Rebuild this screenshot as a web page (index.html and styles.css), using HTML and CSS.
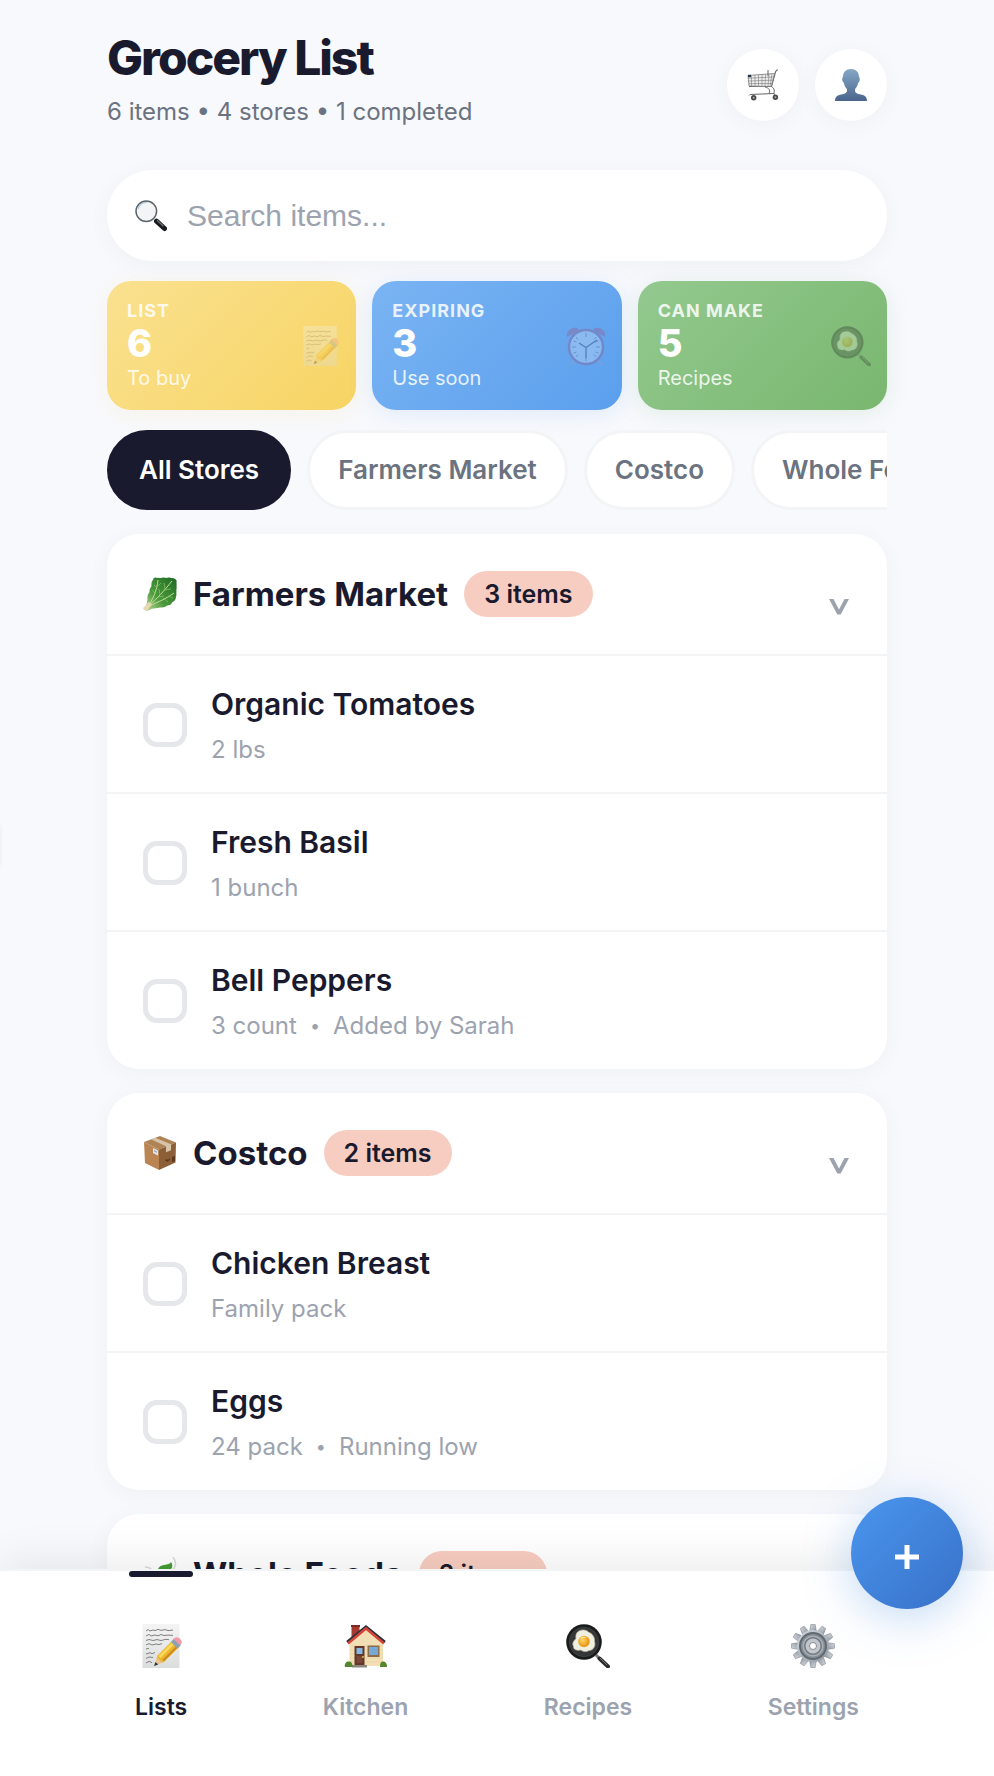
FILE: index.html
```html
<!DOCTYPE html>
<html lang="en">
<head>
<meta charset="utf-8">
<meta name="viewport" content="width=device-width, initial-scale=1">
<title>Grocery List</title>
<link rel="stylesheet" href="styles.css">
</head>
<body>
<svg class="sprite" aria-hidden="true">
  <defs>
    <linearGradient id="g-person" x1="0" y1="0" x2="0" y2="1"><stop offset="0" stop-color="#85a8c6"/><stop offset="1" stop-color="#4a648c"/></linearGradient>
    <linearGradient id="g-leaf" x1="0" y1="1" x2="1" y2="0"><stop offset="0" stop-color="#c9dfa0"/><stop offset=".4" stop-color="#4c9a3d"/><stop offset="1" stop-color="#1d6a22"/></linearGradient>
    <linearGradient id="g-paper" x1="0" y1="0" x2="0" y2="1"><stop offset="0" stop-color="#f4f4f4"/><stop offset="1" stop-color="#dcdddd"/></linearGradient>
    <linearGradient id="g-gear" x1="0" y1="0" x2="1" y2="1"><stop offset="0" stop-color="#d5dae0"/><stop offset="1" stop-color="#8e959f"/></linearGradient>
    <radialGradient id="g-yolk" cx=".4" cy=".4"><stop offset="0" stop-color="#ffd760"/><stop offset="1" stop-color="#e99b1e"/></radialGradient>
  </defs>
  <symbol id="cart" viewBox="0 0 32 32">
    <path d="M31 .8c-1 .2-2 .7-2.500 2.200L24.500 17.500H2" fill="none" stroke="#666" stroke-width="1.100"/>
    <path d="M1 6.500 27.500 4.500 24.300 17.600 2 17z" fill="#eee" stroke="#777" stroke-width=".8"/>
    <path d="M4.500 6.500v10.700M8 6v11.200M11.500 5.800v11.400M15 5.500v12M18.500 5.300 18 17.500M22 5 21 17.500M25 4.800 23 17.500M1.500 9.200 26.500 8M1.700 12 26 11.200M2 14.600 25 14.500" stroke="#888" stroke-width=".7"/>
    <path d="M21 1v6M24.500 17.500c3 2 3.500 5 2 7.500M18 18c4 1 5.500 3 4 6.500M2 26.500l1-1L27 24.500l1 3" fill="none" stroke="#666" stroke-width="1"/>
    <path d="M1 5.800h3v2.400H1z" fill="#23384a"/>
    <circle cx="6.700" cy="28.700" r="2.700" fill="#4c4748"/><circle cx="28.400" cy="28.300" r="2.700" fill="#4c4748"/>
    <circle cx="6.700" cy="28.700" r="1" fill="#aaa"/><circle cx="28.400" cy="28.300" r="1" fill="#aaa"/>
  </symbol>
  <symbol id="person" viewBox="0 0 32 32">
    <path d="M16 0c5 0 8 3.200 8 8 .2 0 .8.600.8 2.200 0 1.900-.8 3-1.500 3.200-.6 3-2 5.200-3.300 6.600v2.500c1 2 3.500 2.600 7 3.300 3.200.7 5 2.600 5 6.200H0c0-3.600 1.800-5.500 5-6.200 3.500-.7 6-1.300 7-3.300V20c-1.300-1.400-2.700-3.600-3.300-6.600-.7-.2-1.500-1.300-1.500-3.200C7.200 8.600 7.800 8 8 8c0-4.800 3-8 8-8z" fill="url(#g-person)"/>
  </symbol>
  <symbol id="search" viewBox="0 0 32 32">
    <path d="m19.500 20 3 2.500" stroke="#777" stroke-width="2"/>
    <path d="m21.500 21.200 8 7.300" stroke="#181a1c" stroke-width="5" stroke-linecap="round"/>
    <path d="m22 20.300 6.500 6" stroke="#70757a" stroke-width="1.200"/>
    <circle cx="11.300" cy="11.300" r="10.300" fill="#f3f4f5" stroke="#5d6469" stroke-width="1.500"/>
    <path d="M3 9a9 9 0 0 1 9-6.500" fill="none" stroke="#a8c9e4" stroke-width="1.200"/>
  </symbol>
  <symbol id="memo" viewBox="0 0 44 44">
    <path d="M3.500 0h37v44h-37z" fill="url(#g-paper)"/>
    <path d="m7 7 2-1.500 2 1.500 3-1 2 .6 3-1.200 3 1 4-.8 3 1 5-.5M7 12l3-1.600 2 1.600 4-1 3 .8 3-1.300 3 1 4-.4 5 .3M7 16.500l3-1 4 1 4-.9 4 .9 5-1.200 3 .4M7 21l3-1.400 3 1.400 4-1 3 .6 3-1M7 25l3-.7M7 30l4-1.300 2 1 3-1.200M7 34.500l3-1.500 4 .5M7 39l3-1.600 3 1.200" fill="none" stroke="#808080" stroke-width="1"/>
    <path d="m16 41 2.500-9.500L34 16l6.500 6.500L25 38z" fill="#edb62d"/>
    <path d="m20.500 33 15-15" stroke="#fbd95f" stroke-width="2.500"/>
    <path d="m24.300 36.500 14.500-14.500" stroke="#cc8a1d" stroke-width="2"/>
    <path d="M16 41l1.800-7.500 5.500 5z" fill="#e7c596"/><path d="m15 42 1.500-4 2.700 2.500z" fill="#333"/>
    <path d="m32 18 3-3.500 7 6.500-3.500 3.500z" fill="#8ba1b6"/>
    <path d="m34.500 15 2-1.500c2.500-1.500 7.500 3 6 5.700L41 21.300z" fill="#f19aa5"/>
  </symbol>
  <symbol id="alarm" viewBox="0 0 40 40">
    <path d="m9 33-5 6M31 33l5 6" stroke="#9ba5b1" stroke-width="2"/>
    <path d="M1 11C0 6 4 1 11 2l2 2.500zM39 11c1-5-3-10-10-9l-2 2.500z" fill="#a84a72"/>
    <circle cx="20" cy="21" r="17" fill="#e2ecf5" stroke="#9a4a78" stroke-width="2.500"/>
    <path d="M20 7v4M20 31v4M6 21h4M30 21h4M10 11l2 2.500M30 11l-2 2.500M10 31l2-2.500M30 31l-2-2.500M7.500 15l3 1M32.500 15l-3 1M7.500 27l3-1M32.500 27l-3-1" stroke="#7d6780" stroke-width="1"/>
    <path d="m13 17 7 4.500 11-7.500M20 21v11" fill="none" stroke="#222b3b" stroke-width="1.300"/>
  </symbol>
  <symbol id="pan" viewBox="0 0 44 44">
    <path d="m30 31 4 4" stroke="#777" stroke-width="3"/>
    <path d="m33.500 34.500 8.500 8" stroke="#2c2c2d" stroke-width="4" stroke-linecap="round"/>
    <path d="m34 34 7 7" stroke="#777" stroke-width="1"/>
    <circle cx="18" cy="18" r="17.800" fill="#1a1b1b"/><circle cx="18" cy="18" r="14.800" fill="#353637" stroke="#4b4d4d" stroke-width=".6"/>
    <path d="M13 7c4-2 8-1 10 1.500 3.500 1 6 5 5.500 9 1.500 4-1 9-5.500 9-3 2-6 1-8-.5-4 1-8-.5-7.500-3.500-2-4 1-6 2.500-8C9.500 12 10 8.500 13 7z" fill="#f1efdf" stroke="#bab9a5" stroke-width=".7"/>
    <circle cx="18" cy="17.500" r="5.800" fill="url(#g-yolk)"/><path d="M14.500 15c1.500-2 3.500-2 5-1.300" fill="none" stroke="#fff3b7" stroke-width="1"/>
  </symbol>
  <symbol id="greens" viewBox="0 0 34 34">
    <path d="M1 31c3-3 3-6 3.500-9-.5-3 .5-5 2-7-.3-3 1-4 2-6-.5-3 .5-5 1.500-6 .5-2.500 2-3 4-2 2-1 3 .5 5-.2 2-.8 4 .5 5.500 0 2-.8 3 .4 4.500.2 2 0 4 1 4.800 3-.8 2 .2 3-.3 5 .6 2-.5 3.500 0 5.500-.5 2 .5 3-.5 5 0 3-1.500 4.500-3.500 5.500-1 2.500-3 3.500-5.500 3.500-2 2-4.500 2-7 2-3 1-6 .5-8.500 1.500-2 .5-3 2-5 2z" fill="url(#g-leaf)"/>
    <path d="M4 30C10 23 14 13 15 3M5 29C14 22 21 14 29 4M6 29c9-4 17-7 25-13" fill="none" stroke="#c4dc98" stroke-width="1"/>
    <path d="M12 17 9.500 13M14 11l-3-3M14 10l4-4M17 18l-1-6M22 12l-1-6M21 13l7-1M15 20l6-1M20 21l5 4M25 19l5 2" fill="none" stroke="#8fc46c" stroke-width=".7"/>
    <path d="M0 31c3-2 4-5 6-6l3 3c-2 1-3 4-5 5.500-2 .5-3.500-.5-4-2.500z" fill="#e6d9b4"/>
  </symbol>
  <symbol id="box" viewBox="0 0 34 34">
    <path d="m1 6 16-6 16 6.500-17 7z" fill="#ae8356"/><path d="m1 6 15 7.500V34L2 27z" fill="#ba8453"/><path d="m16 13.500 17-7-.5 20L16 34z" fill="#8c5f38"/>
    <path d="m8 3.200 4-1.500 16 6.600v6l-5 2v-6z" fill="#d7c3a7"/><path d="m10 12 5 2.500v5L10 17z" fill="#e5e8e9"/><path d="m11 14 3 1.500v1.500l-3-1.500z" fill="#8ab0cf"/>
    <path d="m22 24 2-1 1 1 2-2v2l-3 2zM29 21l3-1v5l-3 1z" fill="#5d3920"/>
  </symbol>
  <symbol id="herb" viewBox="0 0 34 34">
    <path d="M28 5c2 3 2 6-2 9-5 4-8 3-12 1 1-5 3-6 7-7 4-1 6-1 7-3z" fill="#459c35"/>
    <path d="M30 0c4 5 3 11-2 14M2 10c5 0 8 3 9 8" fill="none" stroke="#d8dcda" stroke-width="1.500"/>
    <path d="M1 16c5-1 9 1 11 5-6 2-10-1-11-5zM7 33c2-10 9-17 17-22" fill="#67ae4d" stroke="#438a38"/>
  </symbol>
  <symbol id="house" viewBox="0 0 44 44">
    <path d="M7.500 1h8v17h-8z" fill="#a43a30"/><path d="M7 1h9v2H7z" fill="#7c2922"/>
    <path d="M5.500 18 22 4l17 14v24h-33.500z" fill="#f3dfb5"/><path d="M5.500 38h33.500M5.500 34h33.500M5.500 30h33.500M5.500 26h33.500M5.500 22h33.500" stroke="#e1c897" stroke-width=".5"/>
    <path d="M3 18 22 2.500 41 18" fill="none" stroke="#283137" stroke-width="2.500"/><path d="M4 19.500 22 4.500 40 19.500" fill="none" stroke="#d6433b" stroke-width="2.500"/>
    <path d="M10.500 22h10v19h-10z" fill="#63372b"/><path d="M12.500 24h6v6h-6z" fill="#86b9e0"/><path d="M12.500 32h6v7h-6z" fill="#794735"/>
    <path d="M23.500 21.500h12v11.500h-12z" fill="#8d6c4b"/><path d="M25 23h9v8h-9z" fill="#75a9d4"/><path d="M8 41h15v2.500H8z" fill="#8b857d"/>
    <path d="M1 43c-1-4 2-6 4-5.500 2 0 4 2 3.500 5.500zM36 43c0-4 1-5.500 3-5.500s4.500 2 4 5.500z" fill="#55862d"/><circle cx="19" cy="33" r=".9" fill="#edc85a"/>
  </symbol>
  <symbol id="gear" viewBox="0 0 44 44">
    <g fill="url(#g-gear)" stroke="#777b80" stroke-width=".5">
      <path id="tooth" d="m18.500 8 1.300-7.500h4.400L25.500 8z"/>
      <use href="#tooth" transform="rotate(30 22 22)"/><use href="#tooth" transform="rotate(60 22 22)"/><use href="#tooth" transform="rotate(90 22 22)"/><use href="#tooth" transform="rotate(120 22 22)"/><use href="#tooth" transform="rotate(150 22 22)"/><use href="#tooth" transform="rotate(180 22 22)"/><use href="#tooth" transform="rotate(210 22 22)"/><use href="#tooth" transform="rotate(240 22 22)"/><use href="#tooth" transform="rotate(270 22 22)"/><use href="#tooth" transform="rotate(300 22 22)"/><use href="#tooth" transform="rotate(330 22 22)"/>
    </g>
    <circle cx="22" cy="22" r="16" fill="url(#g-gear)"/><circle cx="22" cy="22" r="13" fill="#888f96" stroke="#626a71" stroke-width="2"/><circle cx="22" cy="22" r="9.800" fill="#737a82" stroke="#a9afb5" stroke-width="1.500"/>
    <circle cx="22" cy="22" r="5.500" fill="#fff" stroke="#c2c7cd" stroke-width="4"/><circle cx="22" cy="22" r="3.500" fill="none" stroke="#747479" stroke-width=".8"/>
  </symbol>
</svg>

<div class="app">
  <main class="content">
    <div class="page">
      <header class="header">
        <div>
          <h1 class="title">Grocery List</h1>
          <p class="summary">6 items • 4 stores • 1 completed</p>
        </div>
        <div class="actions">
          <button class="round" type="button" aria-label="Cart"><svg><use href="#cart"/></svg></button>
          <button class="round" type="button" aria-label="Profile"><svg><use href="#person"/></svg></button>
        </div>
      </header>

      <label class="search">
        <svg class="search-icon" aria-hidden="true"><use href="#search"/></svg>
        <input class="search-input" type="text" placeholder="Search items..." aria-label="Search items">
      </label>

      <section class="stats">
        <article class="stat stat-list">
          <div><p class="stat-label">LIST</p><p class="stat-value">6</p><p class="stat-note">To buy</p></div>
          <svg class="stat-icon"><use href="#memo"/></svg>
        </article>
        <article class="stat stat-expiring">
          <div><p class="stat-label">EXPIRING</p><p class="stat-value">3</p><p class="stat-note">Use soon</p></div>
          <svg class="stat-icon"><use href="#alarm"/></svg>
        </article>
        <article class="stat stat-make">
          <div><p class="stat-label">CAN MAKE</p><p class="stat-value">5</p><p class="stat-note">Recipes</p></div>
          <svg class="stat-icon"><use href="#pan"/></svg>
        </article>
      </section>

      <div class="filters">
        <button class="pill pill-active" type="button">All Stores</button>
        <button class="pill" type="button">Farmers Market</button>
        <button class="pill" type="button">Costco</button>
        <button class="pill" type="button">Whole Foods</button>
      </div>

      <section class="store">
        <header class="store-head">
          <svg class="store-icon"><use href="#greens"/></svg>
          <h2 class="store-name">Farmers Market</h2>
          <span class="badge">3 items</span>
          <button class="toggle" type="button" aria-label="Collapse Farmers Market"><svg class="chevron" viewBox="0 0 20 16"><path d="M0 0h4.500L10 10.500 15.500 0H20l-8.300 15.500H8.300z"/></svg></button>
        </header>
        <ul class="items">
          <li class="item"><input class="check" type="checkbox" id="tomatoes"><div><label class="item-name" for="tomatoes">Organic Tomatoes</label><p class="meta"><span>2 lbs</span></p></div></li>
          <li class="item"><input class="check" type="checkbox" id="basil"><div><label class="item-name" for="basil">Fresh Basil</label><p class="meta"><span>1 bunch</span></p></div></li>
          <li class="item"><input class="check" type="checkbox" id="peppers"><div><label class="item-name" for="peppers">Bell Peppers</label><p class="meta"><span>3 count</span><span class="dot">•</span><span>Added by Sarah</span></p></div></li>
        </ul>
      </section>

      <section class="store">
        <header class="store-head">
          <svg class="store-icon"><use href="#box"/></svg>
          <h2 class="store-name">Costco</h2>
          <span class="badge">2 items</span>
          <button class="toggle" type="button" aria-label="Collapse Costco"><svg class="chevron" viewBox="0 0 20 16"><path d="M0 0h4.500L10 10.500 15.500 0H20l-8.300 15.500H8.300z"/></svg></button>
        </header>
        <ul class="items">
          <li class="item"><input class="check" type="checkbox" id="chicken"><div><label class="item-name" for="chicken">Chicken Breast</label><p class="meta"><span>Family pack</span></p></div></li>
          <li class="item"><input class="check" type="checkbox" id="eggs"><div><label class="item-name" for="eggs">Eggs</label><p class="meta"><span>24 pack</span><span class="dot">•</span><span>Running low</span></p></div></li>
        </ul>
      </section>

      <section class="store">
        <header class="store-head">
          <svg class="store-icon"><use href="#herb"/></svg>
          <h2 class="store-name">Whole Foods</h2>
          <span class="badge">2 items</span>
        </header>
      </section>
    </div>
  </main>

  <nav class="nav">
    <div class="nav-inner">
      <a class="nav-item nav-active" href="#lists"><svg class="nav-icon"><use href="#memo"/></svg>Lists</a>
      <a class="nav-item" href="#kitchen"><svg class="nav-icon"><use href="#house"/></svg>Kitchen</a>
      <a class="nav-item" href="#recipes"><svg class="nav-icon"><use href="#pan"/></svg>Recipes</a>
      <a class="nav-item" href="#settings"><svg class="nav-icon"><use href="#gear"/></svg>Settings</a>
    </div>
  </nav>
  <button class="fab" type="button" aria-label="Add item"><svg viewBox="0 0 26 26"><path d="M13 1v24M1 13h24"/></svg></button>
</div>
</body>
</html>
```
FILE: styles.css
```css
* { box-sizing: border-box; }

body {
  margin: 0;
  background: #f8f9fd;
  color: #1a1a2e;
  font-family: Inter, "Liberation Sans", sans-serif;
}

h1, h2, p, ul { margin: 0; padding: 0; }
ul { list-style: none; }
button { font-family: inherit; border: 0; padding: 0; cursor: pointer; }
svg { display: block; }
.sprite { position: absolute; width: 0; height: 0; }

.app {
  position: relative;
  display: flex;
  flex-direction: column;
  height: 100vh;
  overflow: hidden;
}

.content { flex: 1; min-height: 0; overflow-y: auto; scrollbar-width: none; }
.page { max-width: 844px; margin: 0 auto; padding: 32px 32px 0; }

.header { display: flex; justify-content: space-between; align-items: center; margin-bottom: 42px; }
.title { font-size: 48px; line-height: 52px; font-weight: 800; letter-spacing: -2px; }
.summary { margin-top: 12px; font-size: 24px; line-height: 32px; color: #6b7280; }
.actions { display: flex; gap: 16px; padding-top: 10px; }
.round {
  display: grid;
  place-items: center;
  width: 72px;
  height: 72px;
  border-radius: 50%;
  background: #fff;
  box-shadow: 0 4px 24px rgba(0, 0, 0, .04);
}
.round svg { width: 32px; height: 32px; }

.search {
  display: flex;
  align-items: center;
  gap: 20px;
  height: 91px;
  padding: 0 28px;
  border-radius: 46px;
  background: #fff;
  box-shadow: 0 4px 24px rgba(0, 0, 0, .04);
}
.search-icon { width: 32px; height: 32px; flex: none; }
.search-input {
  flex: 1;
  min-width: 0;
  padding: 0;
  border: 0;
  outline: 0;
  background: none;
  color: #1a1a2e;
  font: 30px/36px "Liberation Sans", Arial, sans-serif;
}
.search-input::placeholder { color: #9ca3af; opacity: 1; }

.stats { display: grid; grid-template-columns: repeat(3, 1fr); gap: 16px; margin: 20px 0; }
.stat {
  display: flex;
  justify-content: space-between;
  align-items: center;
  padding: 20px 16px 20px 20px;
  border-radius: 24px;
  color: #fff;
}
.stat-list { background: linear-gradient(135deg, #fae190, #f7d463); box-shadow: 0 4px 24px rgba(247, 212, 99, .14); }
.stat-expiring { background: linear-gradient(135deg, #7ab4f3, #5b9fed); box-shadow: 0 4px 24px rgba(74, 144, 226, .14); }
.stat-make { background: linear-gradient(135deg, #93c98f, #79b76f); box-shadow: 0 4px 24px rgba(90, 160, 90, .14); }
.stat-label { font-size: 18px; line-height: 20px; font-weight: 700; letter-spacing: 1px; color: rgba(255, 255, 255, .85); }
.stat-value { font-size: 38px; line-height: 45px; font-weight: 800; }
.stat-note { font-size: 20px; line-height: 24px; color: rgba(255, 255, 255, .85); }
.stat-icon { width: 40px; height: 40px; opacity: .3; }

.filters { display: flex; gap: 16px; overflow-x: auto; scrollbar-width: none; }
.pill {
  flex: none;
  height: 80px;
  padding: 0 28px;
  border: 3px solid #f3f4f6;
  border-radius: 40px;
  background: #fff;
  color: #6b7280;
  font-size: 26px;
  line-height: 32px;
  font-weight: 600;
}
.pill-active { padding: 0 29px; border-color: #1a1a2e; background: #1a1a2e; color: #fff; }

.store {
  margin-top: 24px;
  border-radius: 32px;
  background: #fff;
  box-shadow: 0 4px 24px rgba(0, 0, 0, .04);
}
.store-head { display: flex; align-items: center; gap: 16px; padding: 37px 36px; border-bottom: 2px solid #f3f4f6; }
.store-icon { width: 34px; height: 34px; flex: none; }
.store-name { font-size: 33px; line-height: 40px; font-weight: 700; }
.badge {
  padding: 7px 20px;
  border-radius: 23px;
  background: #f8cdc1;
  font-size: 25px;
  line-height: 32px;
  font-weight: 600;
}
.toggle { display: flex; align-items: flex-end; height: 46px; margin-left: auto; padding: 0 2px 2px; background: none; }
.chevron { width: 20px; height: 16px; fill: #9ca3af; }

.items { padding-bottom: 1px; }
.item { display: flex; align-items: center; gap: 24px; padding: 25px 36px 24px; border-bottom: 2px solid #f3f4f6; }
.item:last-child { border-bottom: 0; }
.check {
  appearance: none;
  flex: none;
  width: 44px;
  height: 44px;
  margin: 0;
  border: 5px solid #e5e7eb;
  border-radius: 14px;
}
.check:checked { border-color: #4a90e2; background: #4a90e2; }
.item-name { display: block; font-size: 30px; line-height: 46px; font-weight: 600; }
.meta { display: flex; gap: 13px; margin-top: 5px; font-size: 24px; line-height: 36px; color: #9ca3af; }
.dot { font-size: 18px; }

.nav {
  position: relative;
  flex: none;
  border-top: 2px solid #f3f4f6;
  background: #fff;
  box-shadow: 0 -8px 40px rgba(0, 0, 0, .08);
}
.nav-inner { display: flex; justify-content: space-between; max-width: 844px; margin: 0 auto; padding: 0 32px 50px; }
.nav-item {
  position: relative;
  display: flex;
  flex-direction: column;
  align-items: center;
  gap: 25px;
  padding: 53px 28px 5px;
  color: #9ca3af;
  font-size: 23px;
  line-height: 28px;
  font-weight: 600;
  text-decoration: none;
}
.nav-icon { width: 44px; height: 44px; }
.nav-active { color: #1a1a2e; }
.nav-active::before {
  content: "";
  position: absolute;
  top: 0;
  width: 64px;
  height: 6px;
  border-radius: 3px;
  background: #1a1a2e;
}

.fab {
  position: absolute;
  right: 31px;
  bottom: 167px;
  display: grid;
  place-items: center;
  width: 112px;
  height: 112px;
  padding-top: 8px;
  border-radius: 50%;
  background: linear-gradient(135deg, #4a96ee, #3870c8);
  box-shadow: 0 8px 48px rgba(74, 144, 226, .35);
}
.fab svg { width: 26px; height: 26px; fill: none; stroke: #fff; stroke-width: 5; }

.app::after {
  content: "";
  position: absolute;
  top: 826px;
  left: -12px;
  width: 10px;
  height: 40px;
  box-shadow: 0 0 6px rgba(0, 0, 0, .12);
}
```
